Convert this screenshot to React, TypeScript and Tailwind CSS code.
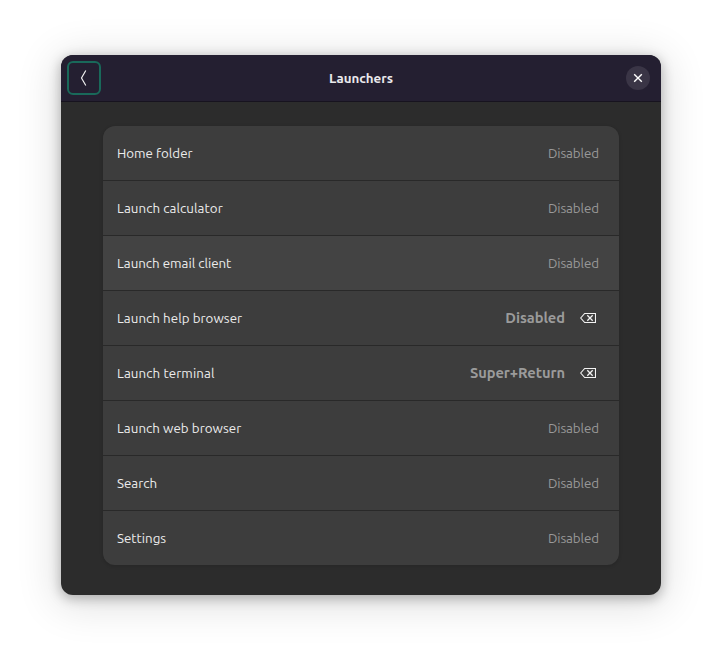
type Launcher = {
  name: string;
  shortcut: string;
  tracking: string;
  custom?: boolean;
  hovered?: boolean;
};

const launchers: Launcher[] = [
  { name: 'Home folder', shortcut: 'Disabled', tracking: 'tracking-normal' },
  { name: 'Launch calculator', shortcut: 'Disabled', tracking: 'tracking-[0.08px]' },
  { name: 'Launch email client', shortcut: 'Disabled', tracking: 'tracking-normal', hovered: true },
  { name: 'Launch help browser', shortcut: 'Disabled', tracking: 'tracking-[0.05px]', custom: true },
  { name: 'Launch terminal', shortcut: 'Super+Return', tracking: 'tracking-[0.1px]', custom: true },
  { name: 'Launch web browser', shortcut: 'Disabled', tracking: 'tracking-[0.05px]' },
  { name: 'Search', shortcut: 'Disabled', tracking: 'tracking-normal' },
  { name: 'Settings', shortcut: 'Disabled', tracking: 'tracking-normal' },
];

function ResetIcon() {
  return (
    <svg width="16" height="10" viewBox="0 0 16 10" fill="none" stroke="#f2f2f2" strokeWidth="1.1">
      <path d="M4.7 0.5H15.5V9.5H4.7L0.7 5Z" />
      <path d="M7.3 2.3L12.7 7.7M12.7 2.3L7.3 7.7" strokeWidth="1.3" />
    </svg>
  );
}

function Row({ item }: { item: Launcher }) {
  return (
    <li className={`flex h-[54px] items-center justify-between pl-[14px] ${item.hovered ? 'bg-[#434343]' : 'bg-[#3d3d3d]'}`}>
      <span className={`pt-0.5 text-[13.33px] leading-5 text-[#ececec] ${item.tracking}`}>{item.name}</span>
      {item.custom ? (
        <div className="flex items-center gap-[15px] pr-[23px]">
          <span className="text-[14.67px] leading-5 font-bold tracking-[-0.05px] text-[#9b9b9b]">{item.shortcut}</span>
          <button aria-label="Reset shortcut"><ResetIcon /></button>
        </div>
      ) : (
        <span className="pt-0.5 pr-5 text-[13.33px] leading-5 tracking-[-0.08px] text-[#999999]">{item.shortcut}</span>
      )}
    </li>
  );
}

export default function App() {
  return (
    <div className="h-[662px] w-[722px] overflow-hidden bg-white px-[61px] pt-[55px] font-['Ubuntu','Noto_Sans',sans-serif]">
      <main className="h-[540px] w-[600px] overflow-hidden rounded-xl bg-[#2c2c2c] shadow-[0_3px_12px_1px_rgba(0,0,0,0.25),0_6px_40px_6px_rgba(0,0,0,0.12)]">
        <header className="grid h-[47px] grid-cols-[1fr_auto_1fr] items-center border-b border-[#17131f] bg-[#241f31]">
          <button aria-label="Back" className="ml-[6px] flex h-[34px] w-[34px] items-center justify-center rounded-md border-2 border-[#19695a]">
            <svg width="8" height="16" viewBox="0 0 8 16" fill="none" stroke="#eeeeee" strokeWidth="1.2">
              <path d="M5.8 0.5L1.5 8L5.8 15.5" />
            </svg>
          </button>
          <h1 className="pt-0.5 text-[13.33px] leading-5 font-bold text-[#eae9ec]">Launchers</h1>
          <button aria-label="Close" className="mr-[11px] flex h-6 w-6 items-center justify-center justify-self-end rounded-full bg-[#3a3546]">
            <svg width="10" height="10" viewBox="0 0 10 10" fill="none" stroke="#ffffff" strokeWidth="1.4">
              <path d="M1.2 1.2L8.8 8.8M8.8 1.2L1.2 8.8" />
            </svg>
          </button>
        </header>
        <ul className="mx-[42px] mt-6 flex flex-col gap-px overflow-hidden rounded-xl bg-[#292929] shadow-[0_1px_3px_1px_rgba(0,0,0,0.1)]">
          {launchers.map((item) => (
            <Row key={item.name} item={item} />
          ))}
        </ul>
      </main>
    </div>
  );
}
